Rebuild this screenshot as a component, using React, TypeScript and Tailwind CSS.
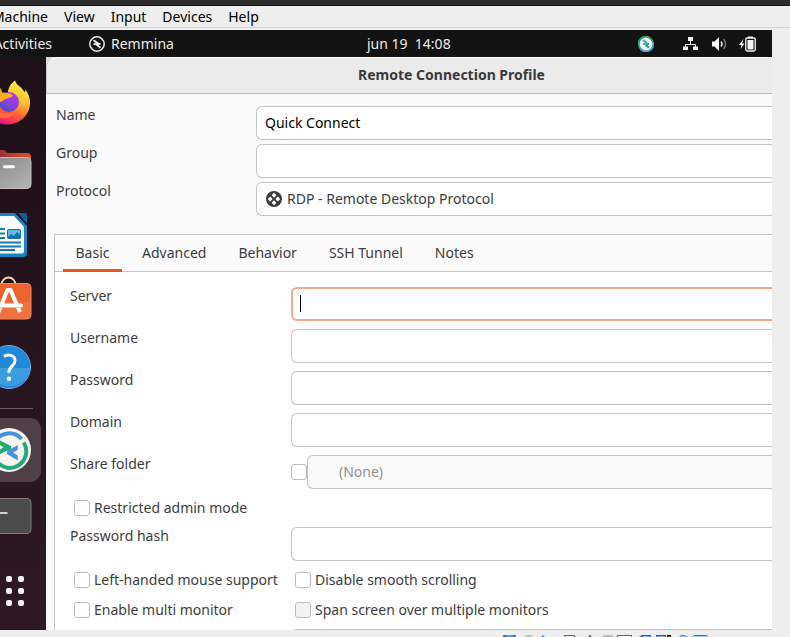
import React from "react";

const control =
  "h-[34px] min-w-0 appearance-none rounded-l-md border border-r-0 border-[#c4c4c4] text-sm outline-none";
const field = `${control} block w-full bg-white px-2 pb-0.5 text-black`;
const box =
  "m-0 size-4 shrink-0 appearance-none rounded-[3px] border border-[#bcbcbc] bg-white checked:bg-[#e95420] disabled:bg-[#f3f3f3]";

function TextRow({ id, label, value }: { id: string; label: string; value?: string }) {
  return (
    <>
      <label htmlFor={id}>{label}</label>
      <input id={id} type="text" defaultValue={value} className={field} />
    </>
  );
}

function Check({ label, disabled }: { label: string; disabled?: boolean }) {
  return (
    <label className="flex h-[22px] items-center gap-1 whitespace-nowrap pl-1">
      <input type="checkbox" disabled={disabled} className={box} />
      {label}
    </label>
  );
}

function DockItem({ name, children }: { name: string; children: React.ReactNode }) {
  return (
    <button type="button" aria-label={name} className="block h-[66px] w-full shrink-0">
      <svg viewBox="0 0 46 66" className="block h-[66px] w-[46px]" fill="none">
        {children}
      </svg>
    </button>
  );
}

function Dock() {
  return (
    <nav
      aria-label="Dock"
      className="flex w-[46px] shrink-0 flex-col bg-gradient-to-b from-[#1d1017] to-[#2e1825] pt-[13px]"
    >
      <DockItem name="Firefox">
        <defs>
          <linearGradient id="fx" x1="24" y1="12" x2="4" y2="55" gradientUnits="userSpaceOnUse">
            <stop stopColor="#fff44f" />
            <stop offset=".4" stopColor="#ffc02e" />
            <stop offset=".7" stopColor="#ff5b36" />
            <stop offset="1" stopColor="#e9127c" />
          </linearGradient>
          <radialGradient id="fxb" cx=".7" cy=".2" r=".9">
            <stop stopColor="#b833e1" />
            <stop offset=".6" stopColor="#7a45dc" />
            <stop offset="1" stopColor="#4b4bb8" />
          </radialGradient>
        </defs>
        <path
          d="M15 10.500c1 3 3 5 6 7l4 5 .5-3c4 6 5.500 11 4 18C27 48 18 54 8 54.500C-3 55-13 47-14 36L-3 24 8 25c-.5-6 2-11 7-14.500Z"
          fill="url(#fx)"
        />
        <circle cx="9" cy="32" r="10" fill="url(#fxb)" />
        <path d="M-4 18 1 18.500l1 4c3 .2 8 0 11 3-1 2-4 2-6 3-4 1-5 4-11 5Z" fill="#ffad1f" />
        <path d="M-4 37c4 8 14 9 20 3-4 9-14 11-20 5Z" fill="#ff6a39" />
      </DockItem>
      <DockItem name="Files">
        <defs>
          <linearGradient id="fl" x1="-13" y1="0" x2="31" y2="0" gradientUnits="userSpaceOnUse">
            <stop stopColor="#7a2148" />
            <stop offset="1" stopColor="#e8521f" />
          </linearGradient>
          <linearGradient id="fg" x1="0" y1="21" x2="20" y2="53" gradientUnits="userSpaceOnUse">
            <stop stopColor="#8c8c8c" />
            <stop offset="1" stopColor="#b0b0b0" />
          </linearGradient>
        </defs>
        <path d="M-10 14H4c1.500 0 2 3 4 3h19q4 0 4 4v18h-41Z" fill="url(#fl)" />
        <rect x="-10" y="21.500" width="41" height="31" rx="4" fill="url(#fg)" stroke="#bdbdbd" />
        <path d="M4.500 30.700h9" stroke="#fff" strokeWidth="3" strokeLinecap="round" />
      </DockItem>
      <DockItem name="LibreOffice Writer">
        <path d="M-8 11h23l12 13v27q0 4-4 4H-8Z" fill="#1785c0" />
        <path d="M18 11h7q2 0 2 2v9Z" fill="#09609b" />
        <path d="M-8 14h22l10 11v24q0 2.500-2.500 2.500H-8Z" fill="#fafafa" />
        <path
          d="M-4 27H5M-4 31.500H5M-4 36H5M-4 40.500h25M-4 44.500h25M-4 48h19"
          stroke="#1679b5"
          strokeWidth="1.800"
        />
        <rect x="7.500" y="27.500" width="13" height="9" rx="1" fill="#63b7e6" stroke="#116fa8" />
        <path d="M8 35l3-3 3 2 3-4 4 4v2H8Z" fill="#116fa8" />
      </DockItem>
      <DockItem name="Ubuntu Software">
        <path d="M1.500 18v-1a7 7.500 0 0 1 14 0v1" stroke="#f1d8a4" strokeWidth="1.800" />
        <rect x="-10" y="15.500" width="41" height="35.500" rx="4" fill="#ee6430" stroke="#f4875f" />
        <path d="M-9 34h39v13q0 3-3 3H-9Z" fill="#f27d4c" opacity=".55" />
        <path d="M-2 45 7.500 22h3L20 44" stroke="#fff" strokeWidth="4" strokeLinejoin="round" />
        <path d="M-2 37.500h23" stroke="#fff" strokeWidth="4" strokeLinecap="round" />
        <path d="M-2 39.500h23" stroke="#f6b9a1" strokeWidth="1" />
      </DockItem>
      <DockItem name="Help">
        <circle cx="9" cy="33" r="21.500" fill="#2288d8" stroke="#64b1ea" />
        <path d="M-12 34h42.500a21.500 21.500 0 0 1-42.500 0Z" fill="#46a5e5" opacity=".7" />
        <path
          d="M4 22.500c3-2.300 11-2 11 4.200 0 5.500-6.200 5.600-6.200 12"
          stroke="#fff"
          strokeWidth="3"
        />
        <circle cx="8.900" cy="44.700" r="2.300" fill="#fff" />
      </DockItem>
      <div className="mb-2 mr-[13px] mt-2 h-px shrink-0 bg-[#6b5f66]" />
      <DockItem name="Remmina">
        <rect x="-20" y="1" width="61" height="64" rx="11" fill="#4f4048" />
        <circle cx="9" cy="33" r="22" fill="#f6f5f1" />
        <path d="M-5 24.300A16.500 16.500 0 0 1 21.500 22" stroke="#4a90e0" strokeWidth="4" />
        <path d="M23.700 25.500A16.500 16.500 0 1 1-5 41.700" stroke="#22aa77" strokeWidth="4" />
        <path d="M-1 23v4.500l4.500 2.800L-1 33v4.500l12-5.500v-3Z" fill="#22aa77" />
        <path d="M17.700 28v5L13 35.500l4.700 3v5L7 37v-3Z" fill="#4a90e0" />
      </DockItem>
      <DockItem name="Terminal">
        <rect x="-10" y="15.500" width="41" height="35" rx="4" fill="#4b4b4b" stroke="#7b7b7b" />
        <path d="M0 30h7.500" stroke="#fff" strokeWidth="1.500" />
      </DockItem>
      <button type="button" aria-label="Show Applications" className="flex flex-1 items-center pt-0.5 pl-1.5">
        <span className="grid grid-cols-2 gap-1.5">
          {[0, 1, 2, 3, 4, 5].map((n) => (
            <span key={n} className="size-1.5 rounded-[2px] bg-[#f2f0f1]" />
          ))}
        </span>
      </button>
    </nav>
  );
}

function TopBar() {
  return (
    <header className="flex h-[27px] shrink-0 items-center bg-[#131313] text-sm text-[#ececec]">
      <div className="flex w-[367px] shrink-0 items-center">
        <div className="flex w-[52px] justify-end">
          <button type="button">Activities</button>
        </div>
        <button type="button" className="ml-[37px] flex items-center gap-1.5">
          <svg width="16" height="16" viewBox="0 0 16 16" fill="none" stroke="#ececec">
            <circle cx="8" cy="8" r="7.200" strokeWidth="1.500" />
            <path d="m4.500 4.200 4 2.800-4 1.500M11.500 7.500 8 9l3.500 2.800" strokeWidth="1.800" />
          </svg>
          Remmina
        </button>
      </div>
      <button type="button" className="whitespace-pre">jun 19  14:08</button>
      <div className="ml-auto flex items-center pr-4">
        <svg width="16" height="16" viewBox="0 0 16 16" fill="none" aria-label="Remmina">
          <circle cx="8" cy="8" r="7" fill="#f5f5f5" />
          <path d="M1 10A7 7 0 0 1 14.500 5.500" stroke="#26a269" strokeWidth="2" />
          <path d="M15 6A7 7 0 0 1 1.300 10.500" stroke="#3b9ddd" strokeWidth="2" />
          <path d="m5 4 3.500 3L5 8.500" stroke="#3b9ddd" strokeWidth="1.800" />
          <path d="M11 7.500 8 9.300l3 2.500" stroke="#26a269" strokeWidth="1.800" />
        </svg>
        <svg className="ml-[29px]" width="15" height="14" viewBox="0 0 15 14" aria-label="Network">
          <path d="M7.500 4v3M2.500 10V7.500h10V10" fill="none" stroke="#eee" />
          <path d="M5 0h5v4H5ZM0 9.500h5V13H0ZM10 9.500h5V13h-5Z" fill="#f4f4f4" />
        </svg>
        <svg className="ml-3.5" width="15" height="14" viewBox="0 0 15 14" fill="none" aria-label="Volume">
          <path d="M0 4.500h2.500L7 0v14L2.500 9.500H0Z" fill="#f4f4f4" />
          <path d="M9 4.500q2 2.500 0 5" stroke="#eee" strokeWidth="1.500" />
          <path d="M11.500 2q4 5 0 10" stroke="#777" strokeWidth="1.500" />
        </svg>
        <svg className="ml-3" width="17" height="16" viewBox="0 0 17 16" aria-label="Battery">
          <path d="M4.500 3 0 9h2.500L1.500 13 5.500 7.500H3.200Z" fill="#f4f4f4" />
          <rect x="6.750" y="2" width="9.500" height="13" rx="1.500" fill="none" stroke="#f4f4f4" strokeWidth="1.300" />
          <path d="M9 .5h5V2H9ZM8.500 4h6v9.500h-6Z" fill="#f4f4f4" />
        </svg>
      </div>
    </header>
  );
}

function Dialog() {
  const tabs = ["Basic", "Advanced", "Behavior", "SSH Tunnel", "Notes"];
  return (
    <main className="flex min-w-0 flex-1 flex-col bg-[#fafafa]">
      <div className="shrink-0 bg-[#d9d9d9]">
        <h1 className="h-[37px] rounded-tl-[10px] border-b border-l border-b-[#bdbdbd] border-l-[#c9c9c9] bg-[#ebebeb] pl-[84px] text-center text-sm leading-9 font-bold text-[#3a3a3a] shadow-[inset_0_1px_0_#fff]">
          Remote Connection Profile
        </h1>
      </div>
      <div className="grid shrink-0 grid-cols-[200px_1fr] gap-y-1 pt-3 pl-2.5">
        <TextRow id="name" label="Name" value="Quick Connect" />
        <TextRow id="group" label="Group" />
        <label htmlFor="protocol">Protocol</label>
        <div className="relative">
          <select id="protocol" className={`${control} block w-full bg-white pl-[30px] text-[#3d3d3d]`}>
            <option>RDP - Remote Desktop Protocol</option>
          </select>
          <svg className="pointer-events-none absolute top-[9px] left-2.5" width="16" height="16" viewBox="0 0 16 16">
            <circle cx="8" cy="8" r="8" fill="#3d3d3d" />
            <g fill="#fff">
              <rect x="6.200" y="2.400" width="3.600" height="3.600" rx=".8" transform="rotate(45 8 4.200)" />
              <rect x="6.200" y="10" width="3.600" height="3.600" rx=".8" transform="rotate(45 8 11.800)" />
              <rect x="2.400" y="6.200" width="3.600" height="3.600" rx=".8" transform="rotate(45 4.200 8)" />
              <rect x="10" y="6.200" width="3.600" height="3.600" rx=".8" transform="rotate(45 11.800 8)" />
            </g>
          </svg>
        </div>
      </div>
      <section className="mt-[18px] ml-2 flex min-h-0 flex-1 flex-col overflow-hidden border-t border-l border-[#c4c4c4] bg-white">
        <div role="tablist" className="flex h-[37px] shrink-0 gap-2 border-b border-[#c4c4c4] bg-[#fafafa] pl-2">
          {tabs.map((tab, i) => (
            <button
              key={tab}
              type="button"
              role="tab"
              aria-selected={i === 0}
              className={
                i === 0
                  ? "-mb-px min-w-[59px] border-b-[3px] border-[#e95420] px-3 pt-0.5 whitespace-nowrap"
                  : "-mb-px min-w-[59px] border-b-[3px] border-transparent px-3 pt-0.5 whitespace-nowrap"
              }
            >
              {tab}
            </button>
          ))}
        </div>
        <div className="grid grid-cols-[221px_1fr] gap-y-2 pt-[15px] pl-[15px]">
          <label htmlFor="server">Server</label>
          <div className="relative">
            <input
              id="server"
              type="text"
              className="block h-[34px] w-full min-w-0 appearance-none rounded-l-md border-2 border-r-0 border-[#f4aa90] bg-white px-2 text-sm text-black outline-none"
            />
            <span className="pointer-events-none absolute top-2 left-[9px] h-[17px] w-px bg-black" />
          </div>
          <TextRow id="username" label="Username" />
          <TextRow id="password" label="Password" />
          <TextRow id="domain" label="Domain" />
          <label htmlFor="folder">Share folder</label>
          <div className="flex items-center">
            <input type="checkbox" aria-label="Share folder" className={box} />
            <select
              id="folder"
              disabled
              className={`${control} block flex-1 bg-[#fafafa] pl-[31px] text-[#929292] opacity-100`}
            >
              <option>(None)</option>
            </select>
          </div>
          <div className="col-span-2">
            <Check label="Restricted admin mode" />
          </div>
          <TextRow id="hash" label="Password hash" />
          <Check label="Left-handed mouse support" />
          <Check label="Disable smooth scrolling" />
          <Check label="Enable multi monitor" />
          <Check label="Span screen over multiple monitors" disabled />
          <TextRow id="resolution" label="" />
        </div>
      </section>
    </main>
  );
}

function StatusBar() {
  return (
    <footer className="flex h-[7px] shrink-0 justify-end overflow-hidden pt-[5px] pr-20">
      <svg width="207" height="12" viewBox="0 0 207 12" fill="none" className="shrink-0">
        <rect x="0" width="13" height="12" rx="1" fill="#2475cf" />
        <path d="M3 1h7" stroke="#8cc5f2" />
        <circle cx="26" cy="6" r="5.500" fill="#d5d5d5" stroke="#aaa" />
        <path d="m39 0 5 3v9h-5Z" fill="#2475cf" />
        <rect x="61.500" y=".5" width="10" height="11" stroke="#666" />
        <path d="M84 5 87 .5 90 5" stroke="#666" strokeWidth="1.500" />
        <rect x="99" width="12" height="12" rx="3" fill="#bcbcbc" />
        <rect x="114.500" y=".5" width="14" height="11" fill="#fff" stroke="#666" />
        <rect x="138.500" y=".5" width="9" height="11" fill="#88b5ef" stroke="#3054b4" />
        <path d="M136 2h4" stroke="#3054b4" />
        <rect x="153.500" y=".5" width="9" height="11" fill="#88b5ef" stroke="#3054b4" />
        <rect x="164" width="4" height="12" fill="#190707" />
        <path d="M166 1v10" stroke="#ee3524" strokeWidth="2" />
        <circle cx="180" cy="6" r="5.500" fill="#9acdf3" stroke="#2475cf" />
        <rect x="190.500" y=".5" width="14" height="11" rx="1" fill="#9acdf3" stroke="#2475cf" />
      </svg>
    </footer>
  );
}

export default function App() {
  return (
    <div className="flex h-screen flex-col overflow-hidden bg-[#eeeeee] font-['Noto_Sans','Open_Sans',sans-serif] text-sm leading-[18px] text-[#3d3d3d]">
      <div className="h-1.5 shrink-0 border-b border-[#1c1218] bg-[#2d2d2d]" />
      <nav
        aria-label="Machine menu"
        className="mb-0.5 flex h-[22px] shrink-0 items-center gap-4 border-b border-[#d2d2d2] text-black"
      >
        <div className="flex w-12 justify-end">
          <button type="button">Machine</button>
        </div>
        <button type="button">View</button>
        <button type="button">Input</button>
        <button type="button">Devices</button>
        <button type="button">Help</button>
      </nav>
      <div className="mr-[18px] flex min-h-0 flex-1 flex-col overflow-hidden">
        <TopBar />
        <div className="flex min-h-0 flex-1">
          <Dock />
          <Dialog />
        </div>
      </div>
      <StatusBar />
    </div>
  );
}
